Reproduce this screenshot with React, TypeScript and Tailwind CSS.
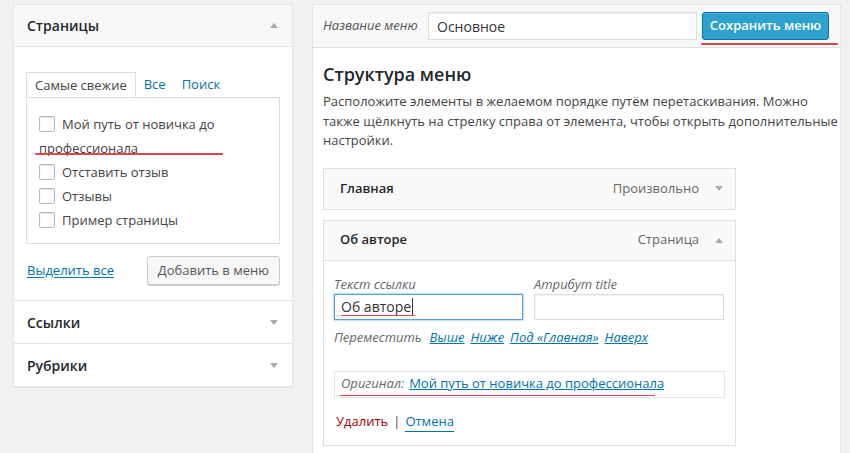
import React from "react";

const FONT = { fontFamily: '"Open Sans", "Noto Sans", sans-serif' };

function Arrow({ up }: { up?: boolean }) {
  return (
    <svg width="8" height="5" viewBox="0 0 8 5" className="shrink-0">
      {up ? <polygon points="0,5 8,5 4,0" fill="#aaa" /> : <polygon points="0,0 8,0 4,5" fill="#aaa" />}
    </svg>
  );
}

function Mark({ className }: { className: string }) {
  return <div className={"pointer-events-none absolute h-[1.5px] rounded-full bg-[#e0434f] " + className} />;
}

function Check({ label }: { label: string }) {
  return (
    <li className="leading-[24px]">
      <span className="mr-[7px] inline-block size-4 translate-y-[3px] rounded-[2px] border border-[#b4b9be] bg-white shadow-[inset_0_1px_2px_rgba(0,0,0,0.1)]" />
      {label}
    </li>
  );
}

function PagesBox() {
  return (
    <div className="flex w-[280px] shrink-0 flex-col self-start border border-[#e5e5e5] bg-white shadow-[0_1px_1px_rgba(0,0,0,0.04)]">
      <div className="flex h-[42px] shrink-0 items-center justify-between border-b border-[#e5e5e5] bg-[#f8f8f8] pl-[13px] pr-[14px]">
        <span className="text-[14px] font-semibold text-[#23282d]">Страницы</span>
        <Arrow up />
      </div>
      <div className="px-[12px] pb-[15px] pt-[25px]">
        <div className="flex text-[13px]">
          <div className="-mb-px h-[25px] border border-b-0 border-[#ddd] bg-white px-[8px] leading-[24px] text-[#444]">Самые свежие</div>
          <div className="px-[8px] leading-[25px] text-[#0073aa]">Все</div>
          <div className="px-[8px] leading-[25px] text-[#0073aa]">Поиск</div>
        </div>
        <div className="relative border border-[#ddd] bg-white pb-[11px] pl-[12px] pr-[8px] pt-[14px]">
          <ul className="text-[13px] text-[#444]">
            <Check label="Мой путь от новичка до профессионала" />
            <Check label="Отставить отзыв" />
            <Check label="Отзывы" />
            <Check label="Пример страницы" />
          </ul>
          <Mark className="left-[8px] top-[55px] w-[188px]" />
        </div>
        <div className="mt-[12px] flex items-center justify-between">
          <a className="pl-px text-[13px] text-[#0073aa] underline underline-offset-2">Выделить все</a>
          <button className="h-[29px] rounded-[3px] border border-[#ccc] bg-[#f7f7f7] px-[10px] text-[13px] text-[#555] shadow-[0_1px_0_#ccc]">
            Добавить в меню
          </button>
        </div>
      </div>
      <div className="flex h-[43px] shrink-0 items-center justify-between border-t border-[#e5e5e5] pl-[13px] pr-[14px]">
        <span className="text-[14px] font-semibold text-[#23282d]">Ссылки</span>
        <Arrow />
      </div>
      <div className="flex h-[43px] shrink-0 items-center justify-between border-t border-[#e5e5e5] pl-[13px] pr-[14px]">
        <span className="text-[14px] font-semibold text-[#23282d]">Рубрики</span>
        <Arrow />
      </div>
    </div>
  );
}

function MenuEditor() {
  return (
    <div className="w-[529px] shrink-0 self-start border border-[#e5e5e5] bg-white">
      <div className="relative flex h-[43px] items-center border-b border-[#dfdfdf] bg-[#f8f8f8] px-[10px]">
        <span className="w-[105px] shrink-0 text-[13px] italic text-[#555]">Название меню</span>
        <div className="flex h-[28px] w-[269px] items-center border border-[#ddd] bg-white px-[8px] text-[14px] text-[#333] shadow-[inset_0_1px_2px_rgba(0,0,0,0.07)]">
          Основное
        </div>
        <button className="ml-[5px] h-[28px] w-[127px] rounded-[3px] border border-[#0074a2] bg-[#2ea2cc] text-[13px] font-semibold text-white shadow-[inset_0_1px_0_rgba(120,200,230,0.5)]">
          Сохранить меню
        </button>
        <Mark className="left-[388px] top-[38px] w-[137px]" />
      </div>
      <div className="px-[10px] pb-[30px] pt-[14px]">
        <h3 className="text-[18px] font-semibold leading-[24px] text-[#23282d]">Структура меню</h3>
        <p className="mt-[6px] whitespace-nowrap text-[13px] leading-[19.5px] text-[#444]">
          Расположите элементы в желаемом порядке путём перетаскивания. Можно
          <br />
          также щёлкнуть на стрелку справа от элемента, чтобы открыть дополнительные
          <br />
          настройки.
        </p>
        <div className="mt-[17px] w-[413px]">
          <div className="flex h-[42px] items-center justify-between border border-[#dfdfdf] bg-[#fafafa] pl-[16px] pr-[12px]">
            <span className="text-[13px] font-semibold text-[#23282d]">Главная</span>
            <div className="flex items-center gap-[16px]">
              <span className="text-[13px] text-[#666]">Произвольно</span>
              <Arrow />
            </div>
          </div>
          <div className="mt-[10px] border border-[#dfdfdf] bg-white">
            <div className="flex h-[40px] items-center justify-between border-b border-[#dfdfdf] bg-[#fafafa] pl-[16px] pr-[12px]">
              <span className="text-[13px] font-semibold text-[#23282d]">Об авторе</span>
              <div className="flex items-center gap-[16px]">
                <span className="text-[13px] text-[#666]">Страница</span>
                <Arrow up />
              </div>
            </div>
            <div className="px-[10px] pb-[13px] pt-[14px]">
              <div className="flex gap-[11px]">
                <div className="w-[189px]">
                  <div className="text-[13px] italic leading-[18px] text-[#666]">Текст ссылки</div>
                  <div className="relative mt-px flex h-[26px] items-center border border-[#5b9dd9] bg-white px-[6px] text-[14px] text-[#333] shadow-[0_0_2px_rgba(30,140,190,0.8)]">
                    Об авторе
                    <span className="ml-px inline-block h-[17px] w-px bg-[#333]" />
                    <Mark className="left-[6px] top-[20px] w-[74px]" />
                  </div>
                </div>
                <div className="w-[190px]">
                  <div className="text-[13px] italic leading-[18px] text-[#666]">Атрибут title</div>
                  <div className="mt-px h-[26px] border border-[#ddd] bg-white shadow-[inset_0_1px_2px_rgba(0,0,0,0.07)]" />
                </div>
              </div>
              <div className="mt-[8px] flex gap-[6px] text-[13px] italic leading-[18px]">
                <span className="mr-[2px] text-[#666]">Переместить</span>
                <a className="text-[#0073aa] underline">Выше</a>
                <a className="text-[#0073aa] underline">Ниже</a>
                <a className="text-[#0073aa] underline">Под «Главная»</a>
                <a className="text-[#0073aa] underline">Наверх</a>
              </div>
              <div className="relative mt-[25px] flex h-[27px] items-center border border-[#e5e5e5] px-[6px] text-[13px]">
                <span className="mr-[5px] italic text-[#666]">Оригинал:</span>
                <a className="text-[#0073aa] underline">Мой путь от новичка до профессионала</a>
                <Mark className="left-[5px] top-[23px] w-[315px]" />
              </div>
              <div className="mt-[13px] flex items-center text-[13px] leading-[20px]">
                <a className="ml-[2px] text-[#a00]">Удалить</a>
                <span className="mx-[5px] text-[#444]">|</span>
                <a className="border-b border-[#0073aa] text-[#0073aa]">Отмена</a>
              </div>
            </div>
          </div>
        </div>
      </div>
    </div>
  );
}

export default function App() {
  return (
    <div style={FONT} className="flex h-[453px] items-start gap-[19px] overflow-hidden bg-[#f1f1f1] pl-[13px] pt-[4px]">
      <PagesBox />
      <MenuEditor />
    </div>
  );
}
